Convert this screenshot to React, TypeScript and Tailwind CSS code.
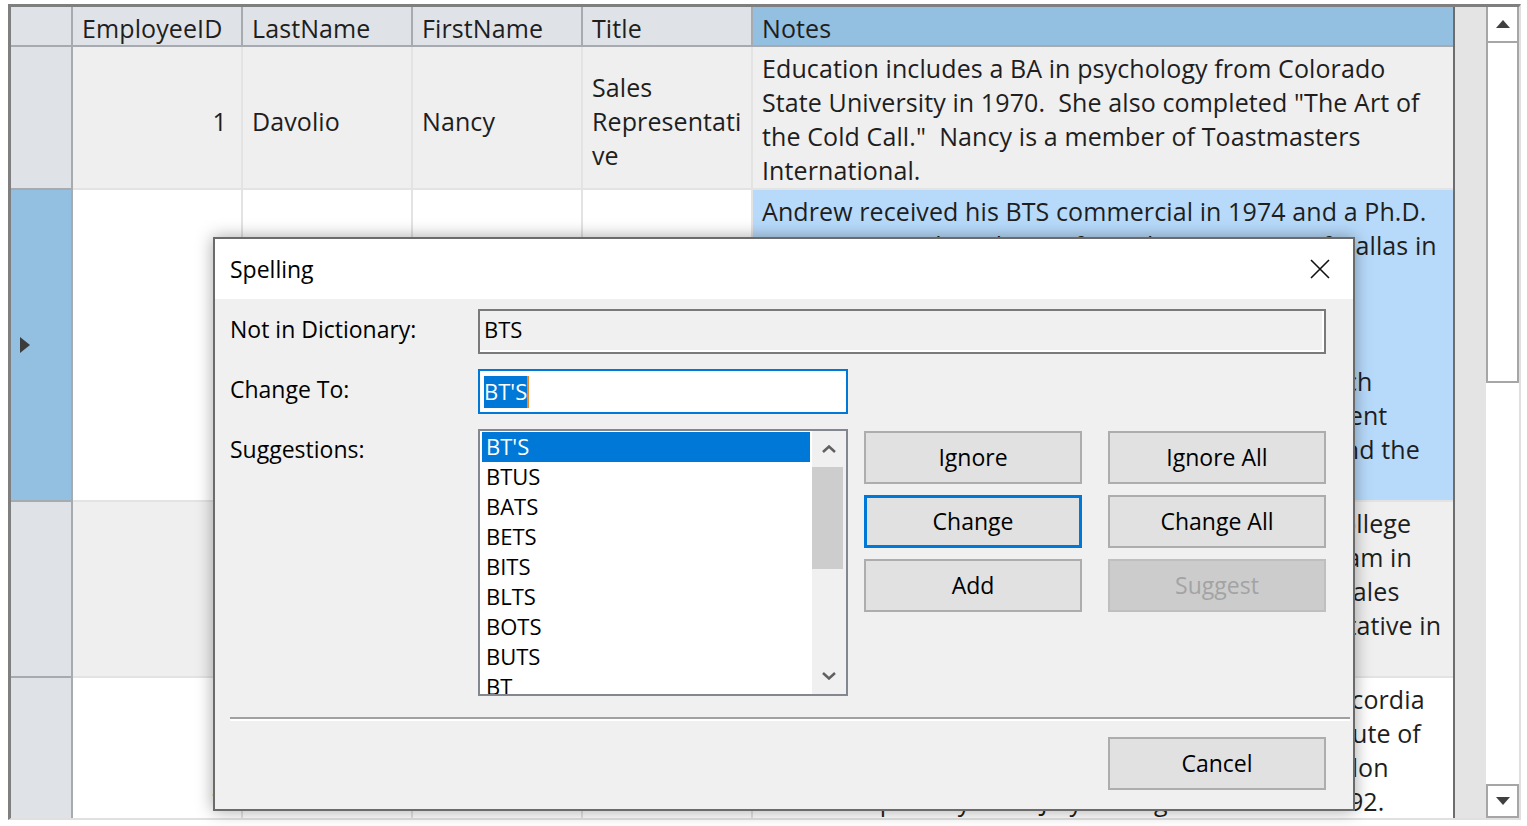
import React from "react";

type Row = {
  id: string;
  last: string;
  first: string;
  title: string[];
  notes: string[];
  h: string;
  alt: boolean;
  selected: boolean;
};

const rows: Row[] = [
  {
    id: "1",
    last: "Davolio",
    first: "Nancy",
    title: ["Sales", "Representati", "ve"],
    notes: [
      "Education includes a BA in psychology from Colorado",
      'State University in 1970.  She also completed "The Art of',
      'the Cold Call."  Nancy is a member of Toastmasters',
      "International.",
    ],
    h: "h-[143px]",
    alt: true,
    selected: false,
  },
  {
    id: "2",
    last: "Fuller",
    first: "Andrew",
    title: ["Vice", "President,", "Sales"],
    notes: [
      "Andrew received his BTS commercial in 1974 and a Ph.D.",
      "in international marketing from the University of Dallas in",
      "1981.  He is fluent in French and Italian and",
      "reads German.  He joined the company as a sales",
      "representative, was promoted to sales manager in",
      "January 1992 and to vice president of sales in March",
      "1993.  Andrew is a member of the Sales Management",
      "Roundtable, the Seattle Chamber of Commerce, and the",
      "Pacific Rim Importers Association.",
    ],
    h: "h-[312px]",
    alt: false,
    selected: true,
  },
  {
    id: "3",
    last: "Leverling",
    first: "Janet",
    title: ["Sales", "Representati", "ve"],
    notes: [
      "Janet has a BS degree in chemistry from Boston College",
      "(1984).  She has also completed a certificate program in",
      "food retailing management.  Janet was hired as a sales",
      "associate in 1991 and promoted to sales representative in",
      "February 1992.",
    ],
    h: "h-[176px]",
    alt: true,
    selected: false,
  },
  {
    id: "4",
    last: "Peacock",
    first: "Margaret",
    title: ["Sales", "Representati", "ve"],
    notes: [
      "Margaret holds a BA in English literature from Concordia",
      "College (1958) and an MA from the American Institute of",
      "Culinary Arts (1966).  She was assigned to the London",
      "office temporarily from July through November 1992.",
    ],
    h: "h-[220px]",
    alt: false,
    selected: false,
  },
];

const suggestions = ["BT'S", "BTUS", "BATS", "BETS", "BITS", "BLTS", "BOTS", "BUTS", "BT", "BTW"];

const headers = ["EmployeeID", "LastName", "FirstName", "Title", "Notes"];

function Grid() {
  return (
    <div className="flex w-[1442px] flex-col overflow-hidden text-[25px] leading-[34px] tracking-[0.1px] text-[#1e1e1e]">
      <div className="grid h-[40px] shrink-0 grid-cols-[62px_170px_170px_170px_170px_700px] bg-[#dfe3e8]">
        <div className="border-b-2 border-r-2 border-[#a7abb0]" />
        {headers.map((h) => (
          <div
            key={h}
            className={
              h === "Notes"
                ? "flex items-center border-b-2 border-[#a7abb0] bg-[#93bfe0] pl-[9px] pt-[3px]"
                : "flex items-center border-b-2 border-r-2 border-[#a7abb0] pl-[9px] pt-[3px]"
            }
          >
            {h}
          </div>
        ))}
      </div>
      {rows.map((r) => (
        <div
          key={r.id}
          className={`grid shrink-0 grid-cols-[62px_170px_170px_170px_170px_700px] ${r.h} ${
            r.alt ? "bg-[#efefef]" : "bg-white"
          }`}
        >
          <div
            className={`flex items-center border-b-2 border-r-2 border-[#a7abb0] pl-[9px] ${
              r.selected ? "bg-[#93bfe0]" : "bg-[#dfe3e8]"
            }`}
          >
            {r.selected && (
              <svg width="10" height="16" viewBox="0 0 10 16">
                <polygon points="0,0 10,8 0,16" fill="#3c3c3c" />
              </svg>
            )}
          </div>
          <div className="flex items-center justify-end border-b-2 border-r-2 border-[#e3e3e3] pr-[14px] pt-[6px]">
            {r.id}
          </div>
          <div className="flex items-center border-b-2 border-r-2 border-[#e3e3e3] pl-[9px] pt-[6px]">{r.last}</div>
          <div className="flex items-center border-b-2 border-r-2 border-[#e3e3e3] pl-[9px] pt-[6px]">{r.first}</div>
          <div className="flex flex-col justify-center overflow-hidden border-b-2 border-r-2 border-[#e3e3e3] pl-[9px] pt-[6px]">
            {r.title.map((t) => (
              <span key={t} className="whitespace-nowrap">
                {t}
              </span>
            ))}
          </div>
          <div
            className={`flex flex-col border-b-2 border-[#e3e3e3] pl-[9px] pt-[4px] ${
              r.selected ? "bg-[#b7dafb]" : ""
            }`}
          >
            {r.notes.map((n, i) => (
              <span key={i} className="whitespace-pre">
                {n}
              </span>
            ))}
          </div>
        </div>
      ))}
    </div>
  );
}

function ScrollBar() {
  return (
    <div className="flex w-[33px] flex-col bg-white">
      <div className="flex h-[36px] items-center justify-center border-x-2 border-b-2 border-[#a6a6a6]">
        <svg width="14" height="8" viewBox="0 0 14 8">
          <polygon points="7,0 14,8 0,8" fill="#404040" />
        </svg>
      </div>
      <div className="h-[340px] border-x-2 border-b-2 border-[#a6a6a6]" />
      <div className="flex-1" />
      <div className="flex h-[34px] items-center justify-center border-2 border-[#a6a6a6]">
        <svg width="14" height="8" viewBox="0 0 14 8">
          <polygon points="0,0 14,0 7,8" fill="#404040" />
        </svg>
      </div>
    </div>
  );
}

function Btn({ label, focus, disabled }: { label: string; focus?: boolean; disabled?: boolean }) {
  const cls = focus
    ? "border-[3px] border-[#0078d7] bg-[#e1e1e1] text-black"
    : disabled
    ? "border-2 border-[#bfbfbf] bg-[#cccccc] text-[#a3a3a3]"
    : "border-2 border-[#adadad] bg-[#e1e1e1] text-black";
  return (
    <div className={`flex h-[53px] w-[218px] items-center justify-center text-[23px] ${cls}`}>{label}</div>
  );
}

function Chevron({ up }: { up?: boolean }) {
  return (
    <svg width="14" height="8" viewBox="0 0 14 8">
      <polyline
        points={up ? "1,7 7,1.5 13,7" : "1,1 7,6.5 13,1"}
        fill="none"
        stroke="#606060"
        strokeWidth="2.5"
      />
    </svg>
  );
}

function SpellingDialog() {
  return (
    <div className="absolute left-[213px] top-[237px] flex h-[574px] w-[1142px] flex-col border-2 border-[#6b6b6b] bg-[#f0f0f0] text-black shadow-[0_0_16px_rgba(0,0,0,0.35)]">
      <div className="flex h-[60px] shrink-0 items-center justify-between bg-white pl-[15px] pr-[23px]">
        <span className="text-[23px]">Spelling</span>
        <svg width="20" height="20" viewBox="0 0 20 20">
          <path d="M1 1 L19 19 M19 1 L1 19" stroke="#111" strokeWidth="1.6" />
        </svg>
      </div>
      <div className="flex flex-col pl-[15px] pr-[27px] pt-[10px] text-[23px]">
        <div className="flex items-center">
          <span className="w-[248px] -translate-y-[2px]">Not in Dictionary:</span>
          <div className="flex h-[45px] flex-1 items-center border-2 border-[#7a7a7a] bg-[#f0f0f0] pl-[4px] text-[22px] shadow-[inset_-2px_-2px_0_#ffffff]">
            <span className="-translate-y-[2px]">BTS</span>
          </div>
        </div>
        <div className="mt-[15px] flex items-center">
          <span className="w-[248px] -translate-y-[2px]">Change To:</span>
          <div className="flex h-[45px] w-[370px] items-center border-2 border-[#0078d7] bg-white pl-[4px] text-[22px]">
            <span className="flex h-[32px] items-center bg-[#0078d7] text-white">BT'S</span>
            <span className="h-[32px] w-[2px] bg-[#f08a24]" />
          </div>
        </div>
        <div className="mt-[15px] flex items-start">
          <span className="mt-[3px] w-[248px]">Suggestions:</span>
          <div className="flex h-[267px] w-[370px] border-2 border-[#828790] bg-white">
            <div className="flex flex-1 flex-col overflow-hidden px-[2px] pt-[1px] text-[22px]">
              {suggestions.map((s, i) => (
                <div
                  key={s}
                  className={`flex h-[30px] shrink-0 items-center pl-[4px] ${
                    i === 0 ? "bg-[#0078d7] text-white" : ""
                  }`}
                >
                  <span className="-translate-y-[1px]">{s}</span>
                </div>
              ))}
            </div>
            <div className="flex w-[34px] flex-col bg-[#f0f0f0]">
              <div className="flex h-[36px] items-center justify-center">
                <Chevron up />
              </div>
              <div className="mr-[3px] h-[102px] bg-[#cdcdcd]" />
              <div className="flex-1" />
              <div className="flex h-[36px] items-center justify-center">
                <Chevron />
              </div>
            </div>
          </div>
          <div className="ml-[16px] mt-[2px] grid grid-cols-[218px_218px] gap-x-[26px] gap-y-[11px]">
            <Btn label="Ignore" />
            <Btn label="Ignore All" />
            <Btn label="Change" focus />
            <Btn label="Change All" />
            <Btn label="Add" />
            <Btn label="Suggest" disabled />
          </div>
        </div>
        <div className="mt-[21px] w-[1120px] border-t-2 border-b-2 border-t-[#a0a0a0] border-b-white" />
        <div className="mt-[16px] flex justify-end">
          <Btn label="Cancel" />
        </div>
      </div>
    </div>
  );
}

export default function App() {
  return (
    <div className="relative h-[826px] w-[1527px] overflow-hidden bg-white font-['Open_Sans',sans-serif]">
      <div className="ml-[8px] mt-[4px] flex h-[816px] w-[1513px] border-b-2 border-l-[3px] border-r-2 border-t-[3px] border-b-[#e0e0e0] border-l-[#7f7f7f] border-r-[#e0e0e0] border-t-[#7f7f7f]">
        <Grid />
        <div className="w-[2px] bg-[#6d6d6d]" />
        <div className="w-[31px] bg-[#e4e4e4]" />
        <ScrollBar />
      </div>
      <SpellingDialog />
    </div>
  );
}
